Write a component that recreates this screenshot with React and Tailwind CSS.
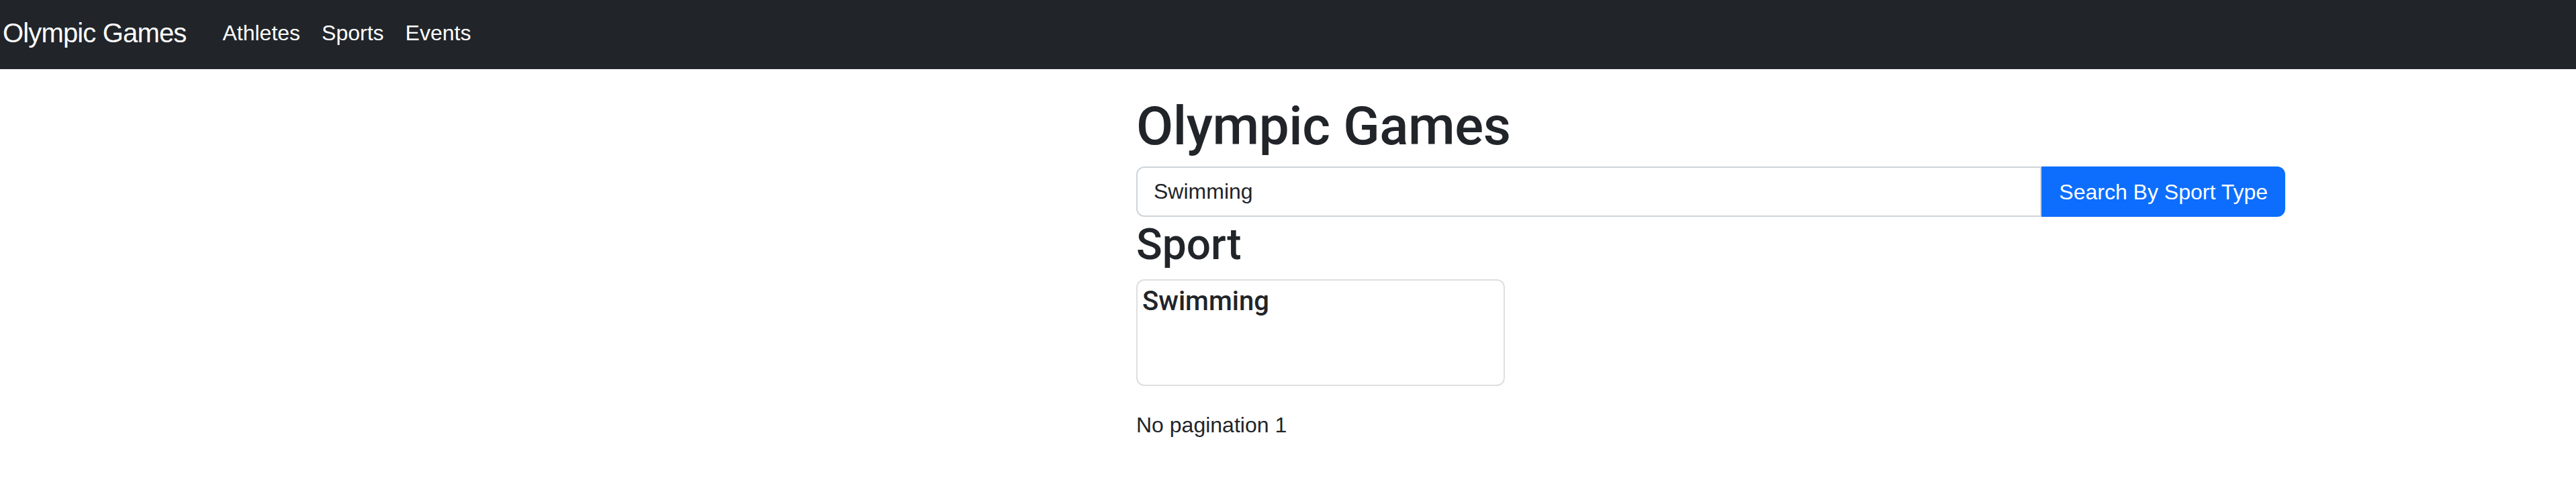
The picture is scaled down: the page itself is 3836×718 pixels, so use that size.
import React, { useState } from 'react';

const NavBar = () => {
  const links = ['Athletes', 'Sports', 'Events'];
  return (
    <nav className="flex items-center h-[103px] pb-[5px] pl-[4px] bg-[#212529]">
      <a href="#" className="text-[40px] leading-[60px] tracking-[-0.85px] text-white mr-[38px]">
        Olympic Games
      </a>
      <div className="flex items-center">
        {links.map((link) => (
          <a key={link} href="#" className="px-[16px] text-[32px] leading-[48px] text-white">
            {link}
          </a>
        ))}
      </div>
    </nav>
  );
};

const App = () => {
  const [query, setQuery] = useState('Swimming');

  return (
    <div className="min-h-screen bg-white text-[#212529] font-['Liberation_Sans',Arial,sans-serif]">
      <NavBar />

      <main className="pl-[1692px] w-[3403px] pt-[37px]">
        <h1 className="font-['Roboto','Liberation_Sans',sans-serif] text-[80px] leading-[96px] tracking-[-0.4px] font-medium mb-[12px]">
          Olympic Games
        </h1>

        <form className="flex h-[75px]" onSubmit={(e) => e.preventDefault()}>
          <input
            type="text"
            value={query}
            onChange={(e) => setQuery(e.target.value)}
            className="flex-1 min-w-0 h-full px-[24px] text-[32px] text-[#212529] border-2 border-[#ced4da] rounded-l-[12px] outline-none"
          />
          <button
            type="submit"
            className="h-full px-[26px] text-[32px] text-white bg-[#0d6efd] rounded-r-[12px]"
          >
            Search By Sport Type
          </button>
        </form>

        <h2 className="font-['Roboto','Liberation_Sans',sans-serif] mt-[3px] text-[64px] leading-[77px] font-medium mb-[13px]">
          Sport
        </h2>

        <div className="w-[549px] h-[159px] border-2 border-[#dfdfdf] rounded-[12px] pt-[7px] pl-[7px]">
          <h5 className="font-['Roboto','Liberation_Sans',sans-serif] text-[40px] leading-[48px] font-medium">
            Swimming
          </h5>
        </div>

        <p className="mt-[34px] text-[32px] leading-[48px]">No pagination 1</p>
      </main>
    </div>
  );
};

export default App;
